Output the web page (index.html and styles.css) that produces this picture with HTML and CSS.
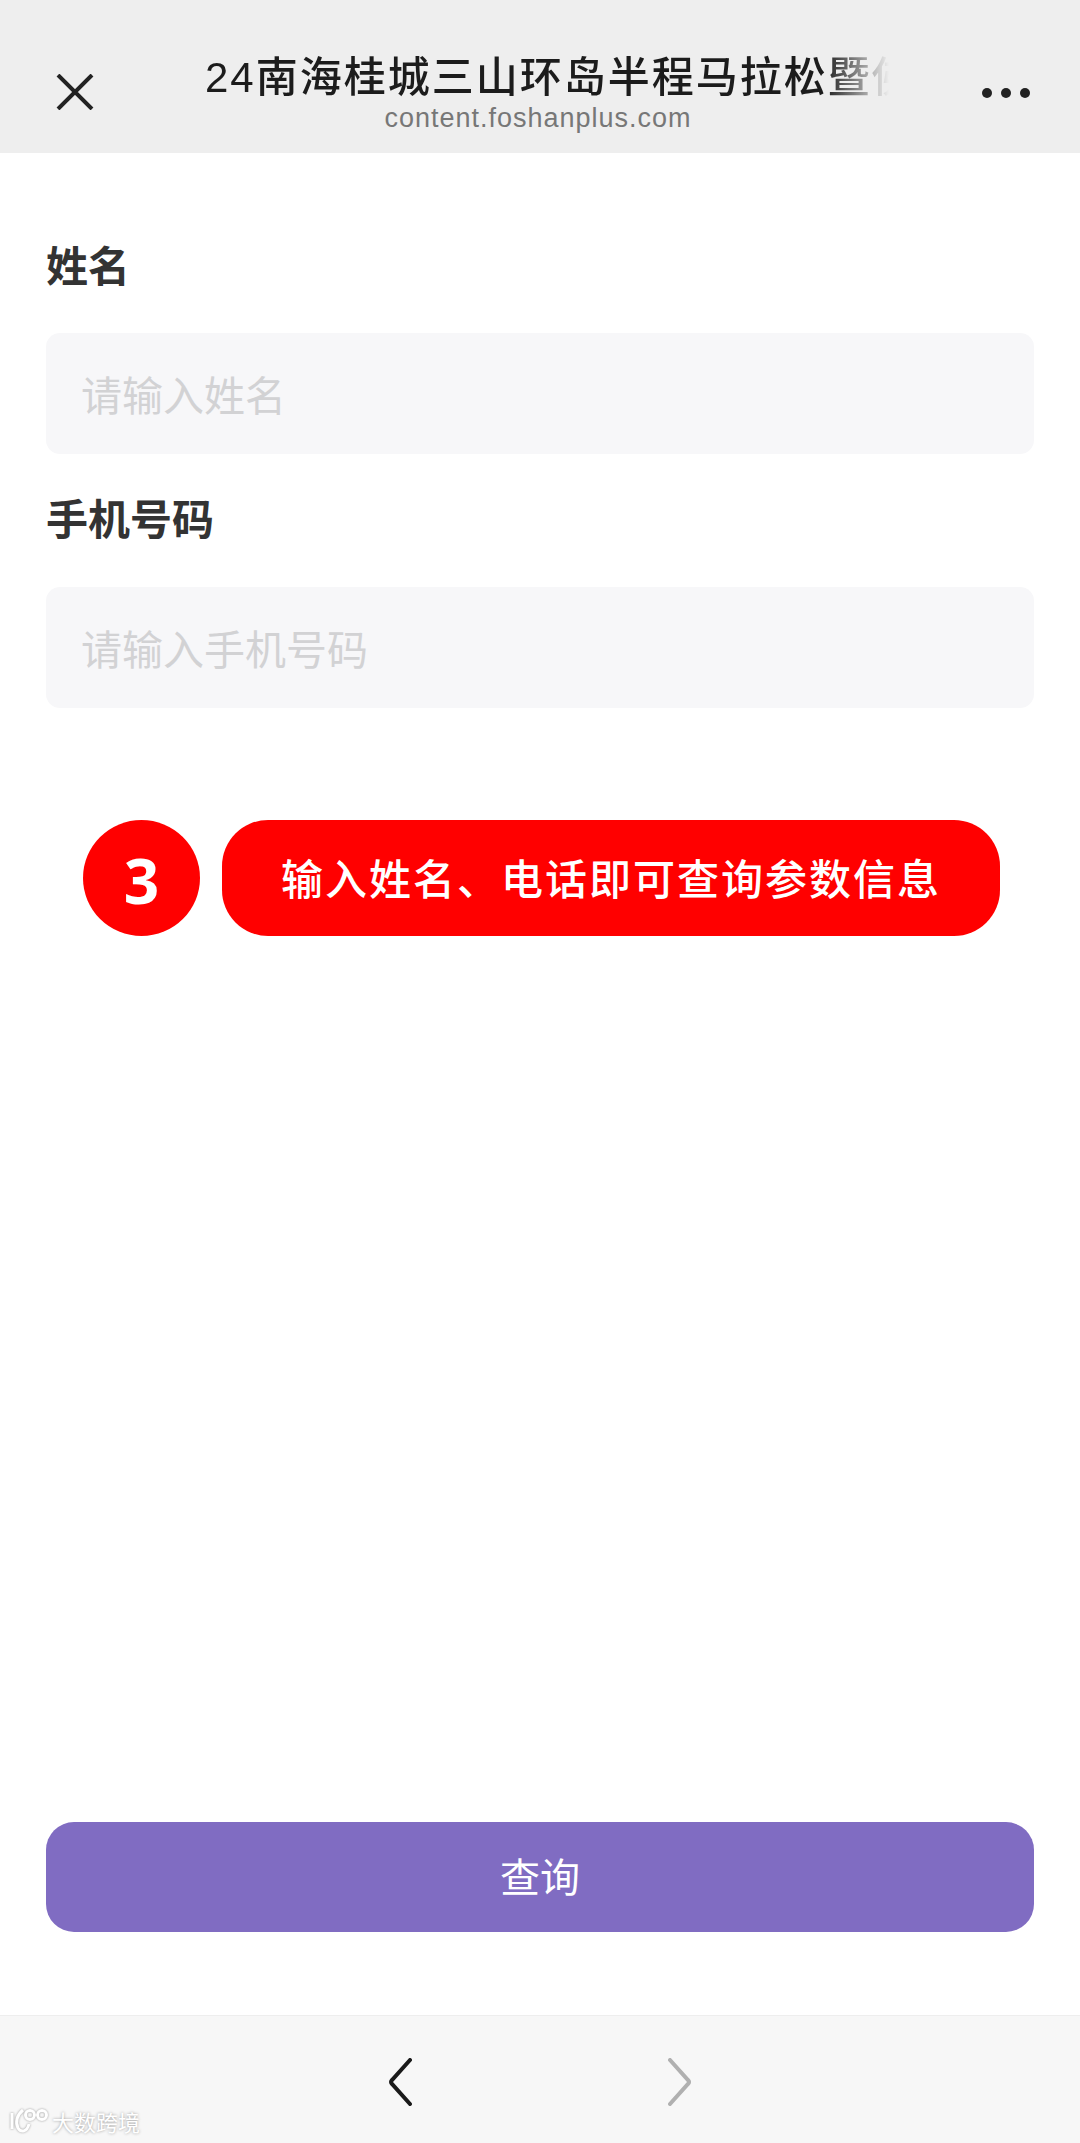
FILE: index.html
```html
<!DOCTYPE html>
<html lang="zh-CN">
<head>
    <meta charset="UTF-8" />
    <title>查询</title>
    <link rel="stylesheet" href="styles.css">
</head>
<body>
<header class="topbar">
    <svg class="close-icon" viewBox="0 0 38 36" width="38" height="36">
        <path d="M2 1 L36 35 M36 1 L2 35" />
    </svg>
    <div class="topbar-text">
        <div class="page-title">24南海桂城三山环岛半程马拉松暨佛</div>
        <div class="page-host">content.foshanplus.com</div>
    </div>
    <div class="more-dots"><span></span><span></span><span></span></div>
</header>

<main class="content">
    <label class="field-label">姓名</label>
    <div class="field-input">请输入姓名</div>
    <label class="field-label phone-label">手机号码</label>
    <div class="field-input">请输入手机号码</div>

    <div class="callout">
        <div class="callout-num">3</div>
        <div class="callout-text">输入姓名、电话即可查询参数信息</div>
    </div>

    <button class="query-btn">查询</button>
</main>

<footer class="bottombar">
    <svg class="nav-icon" viewBox="0 0 24 48" width="24" height="48">
        <path d="M22 2 L4 22 Q2 24 4 26 L22 46" />
    </svg>
    <svg class="nav-icon nav-off" viewBox="0 0 24 48" width="24" height="48">
        <path d="M2 2 L20 22 Q22 24 20 26 L2 46" />
    </svg>
    <div class="watermark">
        <svg viewBox="0 0 40 26" width="40" height="26">
            <path d="M3 5 V21 M14 2 C8 7 6 14 9 20 C12 25 18 24 20 16" />
            <circle cx="21" cy="7" r="4.5" />
            <circle cx="33" cy="7" r="4.5" />
        </svg>
        <span>大数跨境</span>
    </div>
</footer>
</body>
</html>
```

FILE: styles.css
```css
* { box-sizing: border-box; }
html, body { height: 100%; }
body {
    margin: 0;
    display: flex;
    flex-direction: column;
    background: #fff;
    color: #333;
    font-family: "Liberation Sans", "Noto Sans CJK SC", sans-serif;
}

.topbar {
    height: 153px;
    flex: none;
    background: #eee;
    display: flex;
    align-items: flex-start;
    position: relative;
}
.close-icon {
    margin: 74px 0 0 56px;
    flex: none;
}
.close-icon path {
    fill: none;
    stroke: #222;
    stroke-width: 4;
}
.topbar-text {
    width: 720px;
    margin: 54px 0 0 111px;
    text-align: center;
}
.page-title {
    font-size: 42px;
    line-height: 47px;
    letter-spacing: 2px;
    font-weight: 500;
    color: #1c1c1c;
    white-space: nowrap;
    text-align: left;
    -webkit-mask-image: linear-gradient(to right, #000 86%, transparent 95%);
    mask-image: linear-gradient(to right, #000 86%, transparent 95%);
}
.page-host {
    font-size: 27px;
    line-height: 30px;
    letter-spacing: 1px;
    color: #777;
    margin-top: 2px;
    margin-right: 54px;
}
.more-dots {
    position: absolute;
    left: 982px;
    top: 88px;
    display: flex;
    gap: 9px;
}
.more-dots span {
    width: 10px;
    height: 10px;
    border-radius: 50%;
    background: #222;
}

.content {
    flex: 1;
    padding: 0 46px 83px;
    display: flex;
    flex-direction: column;
}
.field-label {
    font-size: 42px;
    line-height: 56px;
    font-weight: 700;
    color: #333;
    margin-top: 87px;
    margin-bottom: 37px;
}
.phone-label {
    margin-top: 39px;
    margin-bottom: 38px;
}
.field-input {
    height: 121px;
    border-radius: 14px;
    background: #f7f7f9;
    padding: 5px 35px 0;
    font-size: 41px;
    line-height: 119px;
    color: #d2d2d4;
}

.callout {
    margin: 112px 34px 0 37px;
    display: flex;
    gap: 22px;
    height: 116px;
}
.callout-num {
    width: 117px;
    flex: none;
    border-radius: 50%;
    background: #f00;
    color: #fff;
    font-family: "Open Sans", sans-serif;
    font-size: 62px;
    font-weight: 700;
    line-height: 120px;
    text-align: center;
}
.callout-text {
    flex: 1;
    border-radius: 46px;
    background: #f00;
    color: #fff;
    font-size: 42px;
    font-weight: 500;
    letter-spacing: 2px;
    line-height: 122px;
    text-align: center;
}

.query-btn {
    margin-top: auto;
    height: 110px;
    padding-bottom: 5px;
    border: none;
    border-radius: 28px;
    background: #806cc2;
    color: #fff;
    font-family: inherit;
    font-size: 40px;
}

.bottombar {
    height: 128px;
    flex: none;
    background: #f7f7f7;
    border-top: 1px solid #eee;
    display: flex;
    justify-content: center;
    align-items: flex-start;
    gap: 256px;
    padding-top: 42px;
    position: relative;
}
.nav-icon path {
    fill: none;
    stroke: #1a1a1a;
    stroke-width: 4;
    stroke-linecap: round;
}
.nav-off path { stroke: #b0b0b0; }
.watermark {
    position: absolute;
    left: 9px;
    bottom: 6px;
    display: flex;
    align-items: center;
    gap: 3px;
    color: #fff;
    font-size: 22px;
    text-shadow: 0 0 3px #999;
}
.watermark svg {
    filter: drop-shadow(0 0 1px #999);
}
.watermark path, .watermark circle {
    fill: none;
    stroke: #fff;
    stroke-width: 3;
}
```
